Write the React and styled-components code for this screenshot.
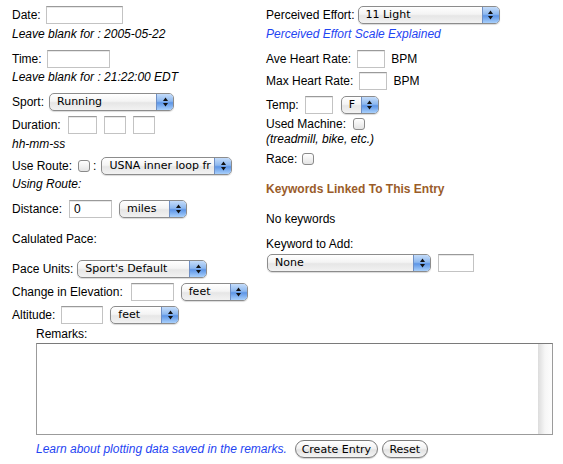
import React from "react"
import styled, { createGlobalStyle } from "styled-components"

const Global = createGlobalStyle`
  body {
    margin: 0;
    background: #fff;
    color: #000;
    font-family: "Liberation Sans", Arial, sans-serif;
    font-size: 12px;
  }
`

const Page = styled.div`
  width: 563px;
  height: 464px;
  padding: 6px 0 0 12px;
  box-sizing: border-box;
  overflow: hidden;
`

const Columns = styled.div`
  display: grid;
  grid-template-columns: 254px 1fr;
`

const Column = styled.div`
  display: flex;
  flex-direction: column;
`

const Row = styled.div`
  display: flex;
  align-items: center;
  height: ${(p) => p.$h || 18}px;
  margin-top: ${(p) => p.$mt || 0}px;
  white-space: nowrap;
`

const Text = styled.div`
  line-height: 14px;
  margin-top: ${(p) => p.$mt || 0}px;
  font-style: ${(p) => (p.$italic ? "italic" : "normal")};
  white-space: nowrap;
`

const Link = styled.a`
  color: #1f45f2;
  font-style: italic;
  text-decoration: none;
  line-height: 14px;
  margin-top: ${(p) => p.$mt || 0}px;
  white-space: nowrap;
`

const Heading = styled.div`
  color: #9a5c2a;
  font-weight: bold;
  line-height: 14px;
  margin-top: ${(p) => p.$mt || 0}px;
`

const TextBox = styled.div`
  box-sizing: border-box;
  width: ${(p) => p.$w}px;
  height: 18px;
  margin-left: ${(p) => p.$ml || 0}px;
  border: 1px solid #c3c3c3;
  border-top-color: #9a9a9a;
  background: #fff;
  box-shadow: inset 0 1px 0 #e8e8e8;
  padding: 1px 0 0 4px;
  font-size: 12px;
  line-height: 14px;
`

const SelectBox = styled.div`
  box-sizing: border-box;
  display: flex;
  width: ${(p) => p.$w}px;
  height: 18px;
  margin-left: ${(p) => p.$ml || 0}px;
  border: 1px solid #8c8c8c;
  border-radius: 5px;
  background: linear-gradient(#ffffff 0%, #f4f4f4 45%, #e6e6e6 55%, #f2f2f2 100%);
  box-shadow: 0 1px 1px rgba(0, 0, 0, 0.15);
  overflow: hidden;
`

const SelectText = styled.span`
  flex: 1;
  padding-left: 7px;
  font-family: "DejaVu Sans", "Liberation Sans", sans-serif;
  font-size: 11px;
  line-height: 16px;
  overflow: hidden;
  white-space: nowrap;
`

const SelectButton = styled.span`
  width: 16px;
  display: flex;
  align-items: center;
  justify-content: center;
  border-left: 1px solid #6f8fc4;
  background: linear-gradient(#c4dcfa 0%, #8db8ef 45%, #5d95e6 55%, #a9d0fb 100%);
`

const Check = styled.span`
  box-sizing: border-box;
  display: inline-block;
  width: 12px;
  height: 12px;
  margin-left: ${(p) => p.$ml || 0}px;
  border: 1px solid #8a8a8a;
  border-radius: 3px;
  background: linear-gradient(#ffffff, #e4e4e4);
`

const Gap = styled.span`
  margin-left: ${(p) => p.$ml || 0}px;
`

const Remarks = styled.div`
  margin-left: 24px;
  width: 517px;
`

const AreaBox = styled.div`
  box-sizing: border-box;
  display: flex;
  height: 92px;
  margin-top: 2px;
  border: 1px solid #9b9b9b;
  border-top-color: #7a7a7a;
`

const Area = styled.textarea`
  flex: 1;
  border: none;
  outline: none;
  resize: none;
  padding: 2px;
  font: 12px "Liberation Sans", Arial, sans-serif;
`

const Track = styled.div`
  width: 14px;
  background: linear-gradient(90deg, #dcdcdc, #f6f6f6 50%, #fdfdfd);
`

const Footer = styled.div`
  display: flex;
  align-items: center;
  height: 18px;
  margin-top: 5px;
`

const Button = styled.button`
  box-sizing: border-box;
  height: 18px;
  width: ${(p) => p.$w}px;
  margin-left: ${(p) => p.$ml || 0}px;
  padding: 0;
  border: 1px solid #7c7c7c;
  border-radius: 9px;
  background: linear-gradient(#ffffff 0%, #f3f3f3 45%, #e3e3e3 55%, #f4f4f4 100%);
  box-shadow: 0 1px 1px rgba(0, 0, 0, 0.18);
  font-family: "DejaVu Sans", "Liberation Sans", sans-serif;
  font-size: 11px;
  color: #000;
`

const Arrows = () => (
  <svg width="7" height="10" viewBox="0 0 7 10">
    <path d="M3.5 0.5 L6 4 L1 4 Z" fill="#111" />
    <path d="M3.5 9.5 L6 6 L1 6 Z" fill="#111" />
  </svg>
)

const Select = ({ w, ml, value }) => (
  <SelectBox $w={w} $ml={ml}>
    <SelectText>{value}</SelectText>
    <SelectButton>
      <Arrows />
    </SelectButton>
  </SelectBox>
)

export default function App() {
  return (
    <Page>
      <Global />
      <Columns>
        <Column>
          <Row>
            Date:<TextBox $w={77} $ml={5} />
          </Row>
          <Text $mt={3} $italic>Leave blank for : 2005-05-22</Text>
          <Row $mt={9}>
            Time:<TextBox $w={63} $ml={5} />
          </Row>
          <Text $mt={2} $italic>Leave blank for : 21:22:00 EDT</Text>
          <Row $mt={9}>
            Sport:<Select w={125} ml={5} value="Running" />
          </Row>
          <Row $mt={5}>
            Duration:<TextBox $w={29} $ml={7} />
            <TextBox $w={22} $ml={7} />
            <TextBox $w={22} $ml={7} />
          </Row>
          <Text $mt={3} $italic>hh-mm-ss</Text>
          <Row $mt={6}>
            Use Route:<Check $ml={6} />
            <Gap $ml={3}>:</Gap>
            <Select w={131} ml={5} value="USNA inner loop fr" />
          </Row>
          <Text $mt={2} $italic>Using Route:</Text>
          <Row $mt={9}>
            Distance:<TextBox $w={43} $ml={7}>0</TextBox>
            <Select w={68} ml={7} value="miles" />
          </Row>
          <Text $mt={14}>Calulated Pace:</Text>
          <Row $mt={14}>
            Pace Units:<Select w={130} ml={4} value="Sport's Default" />
          </Row>
          <Row $mt={5}>
            Change in Elevation:<TextBox $w={43} $ml={8} />
            <Select w={67} ml={7} value="feet" />
          </Row>
          <Row $mt={5}>
            Altitude:<TextBox $w={42} $ml={6} />
            <Select w={69} ml={7} value="feet" />
          </Row>
        </Column>
        <Column>
          <Row>
            Perceived Effort:<Select w={142} ml={3} value="11 Light" />
          </Row>
          <Link href="#" $mt={3}>Perceived Effort Scale Explained</Link>
          <Row $mt={9}>
            Ave Heart Rate:<TextBox $w={28} $ml={6} />
            <Gap $ml={6}>BPM</Gap>
          </Row>
          <Row $mt={4}>
            Max Heart Rate:<TextBox $w={28} $ml={6} />
            <Gap $ml={6}>BPM</Gap>
          </Row>
          <Row $mt={6}>
            Temp:<TextBox $w={28} $ml={6} />
            <Select w={38} ml={8} value="F" />
          </Row>
          <Row $mt={3} $h={14}>
            Used Machine:<Check $ml={7} />
          </Row>
          <Text $mt={1} $italic>(treadmill, bike, etc.)</Text>
          <Row $mt={6} $h={14}>
            Race:<Check $ml={5} />
          </Row>
          <Heading $mt={16}>Keywords Linked To This Entry</Heading>
          <Text $mt={16}>No keywords</Text>
          <Text $mt={11}>Keyword to Add:</Text>
          <Row $mt={3}>
            <Select w={164} ml={1} value="None" />
            <TextBox $w={36} $ml={7} />
          </Row>
        </Column>
      </Columns>
      <Remarks>
        <Text $mt={3}>Remarks:</Text>
        <AreaBox>
          <Area />
          <Track />
        </AreaBox>
        <Footer>
          <Link href="#">Learn about plotting data saved in the remarks.</Link>
          <Button $w={83} $ml={8}>Create Entry</Button>
          <Button $w={46} $ml={4}>Reset</Button>
        </Footer>
      </Remarks>
    </Page>
  )
}
